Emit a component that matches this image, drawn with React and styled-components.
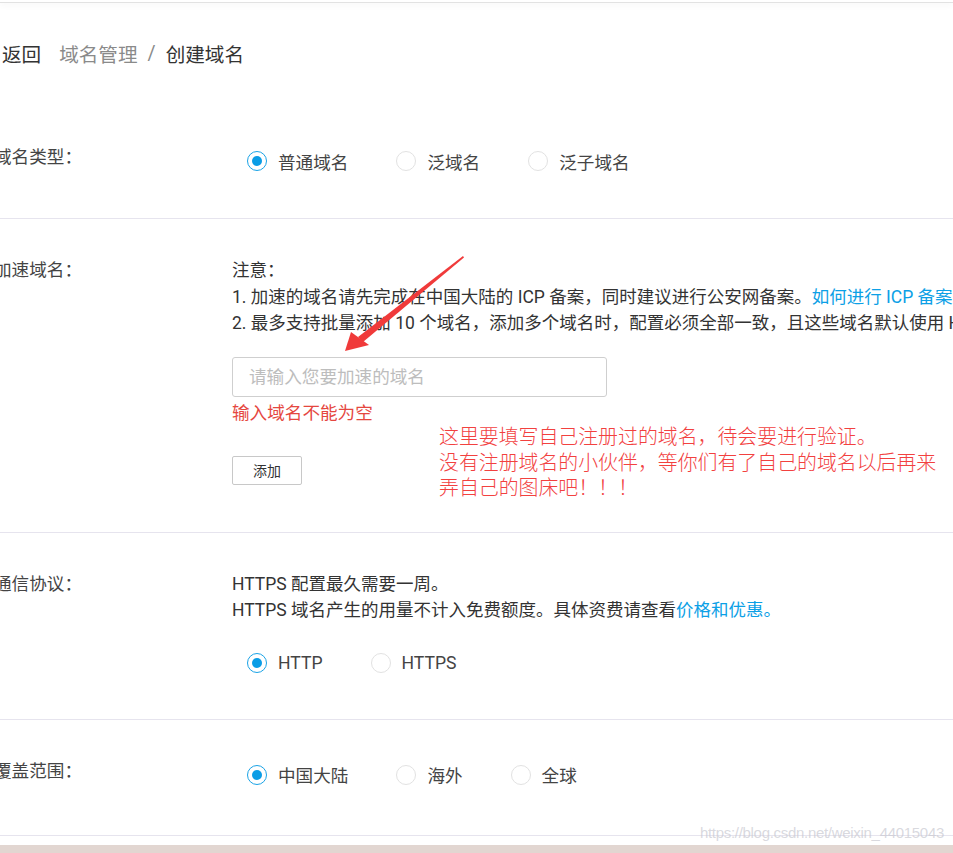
import React from "react";
import styled, { createGlobalStyle } from "styled-components";

const Global = createGlobalStyle`
  html, body {
    margin: 0;
    padding: 0;
    background: #e2d6d1;
  }
  body {
    width: 953px;
    height: 853px;
    overflow: hidden;
    font-family: Roboto, "Noto Sans CJK SC", sans-serif;
    color: #333;
  }
`;

export default function App() {
  return (
    <Page>
      <Global />
      <TopBar />
      <Breadcrumb>
        <BackIcon viewBox="0 0 12 20">
          <path d="M10 2 L2 10 L10 18" fill="none" stroke="#555" strokeWidth="2" />
        </BackIcon>
        <Crumb>返回</Crumb>
        <Crumb $muted $gap>域名管理</Crumb>
        <Slash>/</Slash>
        <Crumb>创建域名</Crumb>
      </Breadcrumb>

      <Section $top={37} $pt={41} $pb={44}>
        <Label>域名类型：</Label>
        <Content>
          <RadioGroup>
            <Radio checked>普通域名</Radio>
            <Radio>泛域名</Radio>
            <Radio>泛子域名</Radio>
          </RadioGroup>
        </Content>
      </Section>

      <Section>
        <Label>加速域名：</Label>
        <Content>
          <Note>注意：</Note>
          <Note>
            1. 加速的域名请先完成在中国大陆的 ICP 备案，同时建议进行公安网备案。
            <Link>如何进行 ICP 备案？</Link>
          </Note>
          <Note>
            2. 最多支持批量添加 10 个域名，添加多个域名时，配置必须全部一致，且这些域名默认使用 HTTP 协议。
          </Note>
          <Input placeholder="请输入您要加速的域名" />
          <Error>输入域名不能为空</Error>
          <Button>添加</Button>
        </Content>
      </Section>

      <Section $pb={43}>
        <Label>通信协议：</Label>
        <Content>
          <Note>HTTPS 配置最久需要一周。</Note>
          <Note>
            HTTPS 域名产生的用量不计入免费额度。具体资费请查看<Link>价格和优惠。</Link>
          </Note>
          <RadioGroup $top={26}>
            <Radio checked>HTTP</Radio>
            <Radio>HTTPS</Radio>
          </RadioGroup>
        </Content>
      </Section>

      <Section>
        <Label>覆盖范围：</Label>
        <Content>
          <RadioGroup>
            <Radio checked>中国大陆</Radio>
            <Radio>海外</Radio>
            <Radio>全球</Radio>
          </RadioGroup>
        </Content>
      </Section>

      <Annotation>
        这里要填写自己注册过的域名，待会要进行验证。
        <br />
        没有注册域名的小伙伴，等你们有了自己的域名以后再来
        <br />
        弄自己的图床吧！！！
      </Annotation>

      <Arrow width="130" height="100" viewBox="0 0 130 100">
        <path d="M119 1 L120 2.5 L19 87 L14 82 Z" fill="#f03a3a" />
        <path d="M1 96 L7 77 L25 90 Z" fill="#f03a3a" />
      </Arrow>

      <Watermark>https://blog.csdn.net/weixin_44015043</Watermark>
    </Page>
  );
}

function Radio({ checked, children }) {
  return (
    <RadioItem>
      <Circle $checked={checked} />
      <span>{children}</span>
    </RadioItem>
  );
}

const Page = styled.div`
  position: relative;
  width: 953px;
  height: 845px;
  background: #fff;
  overflow: hidden;
`;

const TopBar = styled.div`
  height: 2px;
  border-bottom: 1px solid #e2e2e2;
  box-shadow: 0 2px 6px rgba(0, 0, 0, 0.05);
`;

const Breadcrumb = styled.div`
  display: flex;
  align-items: center;
  height: 26px;
  margin: 37px 0 0 -9px;
  font-size: 19.6px;
`;

const BackIcon = styled.svg`
  width: 10px;
  height: 16px;
  margin-right: 1px;
`;

const Crumb = styled.span`
  color: ${(p) => (p.$muted ? "#8a8a8a" : "#333")};
  margin-left: ${(p) => (p.$gap ? "18px" : "0")};
`;

const Slash = styled.span`
  color: #8a8a8a;
  margin: 0 10px;
`;

const Section = styled.div`
  display: flex;
  margin: ${(p) => p.$top || 0}px 0 0 -6px;
  padding: ${(p) => p.$pt || 38}px 0 ${(p) => p.$pb || 47}px;
  border-bottom: 1px solid #e6e4ee;
`;

const Label = styled.div`
  flex: 0 0 238px;
  font-size: 17.6px;
  line-height: 26px;
  color: #444;
  white-space: nowrap;
`;

const Content = styled.div`
  flex: 1;
  min-width: 0;
  display: flex;
  flex-direction: column;
  align-items: flex-start;
`;

const RadioGroup = styled.div`
  display: flex;
  align-items: center;
  margin: ${(p) => p.$top || 4}px 0 0 15px;
  height: 26px;
`;

const RadioItem = styled.label`
  display: flex;
  align-items: center;
  margin-right: 48px;
  font-size: 17.6px;
  color: #444;
`;

const Circle = styled.span`
  position: relative;
  width: 18px;
  height: 18px;
  border-radius: 50%;
  border: 1px solid ${(p) => (p.$checked ? "#1aa3e6" : "#e2e2e2")};
  margin-right: 11px;
  &::after {
    content: "";
    display: ${(p) => (p.$checked ? "block" : "none")};
    position: absolute;
    left: 4px;
    top: 4px;
    width: 10px;
    height: 10px;
    border-radius: 50%;
    background: #0a9de6;
  }
`;

const Note = styled.div`
  font-size: 17.5px;
  line-height: 26.5px;
  color: #333;
  white-space: nowrap;
`;

const Link = styled.span`
  color: #0ca0e6;
`;

const Input = styled.input`
  box-sizing: border-box;
  width: 375px;
  height: 40px;
  margin-top: 20px;
  padding: 0 16px;
  border: 1px solid #cfcfcf;
  border-radius: 3px;
  font-family: Roboto, "Noto Sans CJK SC", sans-serif;
  font-size: 17.6px;
  outline: none;
  &::placeholder {
    color: #bdbdbd;
  }
`;

const Error = styled.div`
  margin-top: 3px;
  font-size: 17.6px;
  line-height: 26px;
  color: #e5473f;
`;

const Button = styled.button`
  box-sizing: border-box;
  width: 70px;
  height: 29px;
  margin-top: 30px;
  border: 1px solid #c8c8c8;
  border-radius: 2px;
  background: #fff;
  font-family: Roboto, "Noto Sans CJK SC", sans-serif;
  font-size: 14px;
  color: #333;
`;

const Annotation = styled.div`
  position: absolute;
  left: 439px;
  top: 423px;
  font-family: "Noto Sans CJK SC", sans-serif;
  font-weight: 300;
  font-size: 19.9px;
  line-height: 25.5px;
  color: #f2413f;
  white-space: nowrap;
`;

const Arrow = styled.svg`
  position: absolute;
  left: 344px;
  top: 255px;
`;

const Watermark = styled.div`
  position: absolute;
  right: 9px;
  top: 824px;
  font-size: 15px;
  letter-spacing: -0.3px;
  color: rgba(200, 200, 208, 0.7);
  font-family: "Liberation Sans", sans-serif;
`;
